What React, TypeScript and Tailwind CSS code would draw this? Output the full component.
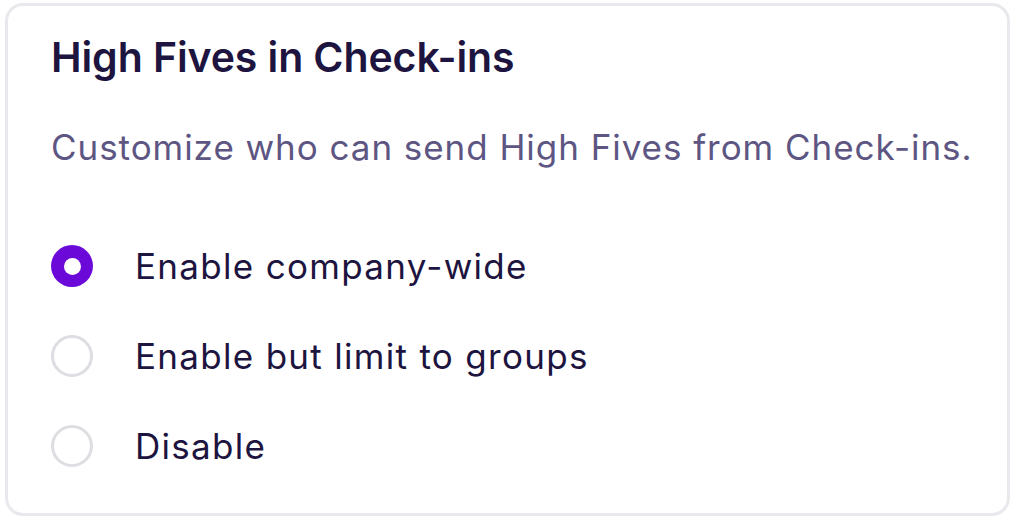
import { useState } from "react";

const options = [
  { id: "company", label: "Enable company-wide" },
  { id: "groups", label: "Enable but limit to groups" },
  { id: "disable", label: "Disable" },
];

function Radio({ checked }: { checked: boolean }) {
  if (checked) {
    return (
      <span className="flex h-[42px] w-[42px] shrink-0 items-center justify-center rounded-full bg-[#6b0ad8]">
        <span className="h-[17px] w-[17px] rounded-full bg-white" />
      </span>
    );
  }
  return <span className="h-[42px] w-[42px] shrink-0 rounded-full border-[3px] border-[#dddde2] bg-white" />;
}

export default function App() {
  const [value, setValue] = useState("company");

  return (
    <div className="h-[521px] w-[1018px] bg-white pb-[5px] pl-[5px] pr-[8px] pt-[3px] font-['Inter',sans-serif]">
      <div className="h-full rounded-[18px] border-[3px] border-[#e9e9ed] pl-[43px] pt-[27px]">
        <h2 className="text-[41px] font-semibold leading-[48px] tracking-[-0.1px] text-[#1d1440]">
          High Fives in Check-ins
        </h2>
        <p className="mt-[44px] text-[35px] leading-[44px] tracking-[0.95px] text-[#5d5683]">
          Customize who can send High Fives from Check-ins.
        </p>
        <div className="mt-[73px] flex flex-col gap-[42px]">
          {options.map((o) => (
            <label
              key={o.id}
              className="flex h-[48px] cursor-pointer items-center gap-[42px]"
              onClick={() => setValue(o.id)}
            >
              <Radio checked={value === o.id} />
              <span className="text-[35px] leading-[48px] tracking-[1.3px] text-[#1d1440]">{o.label}</span>
            </label>
          ))}
        </div>
      </div>
    </div>
  );
}
